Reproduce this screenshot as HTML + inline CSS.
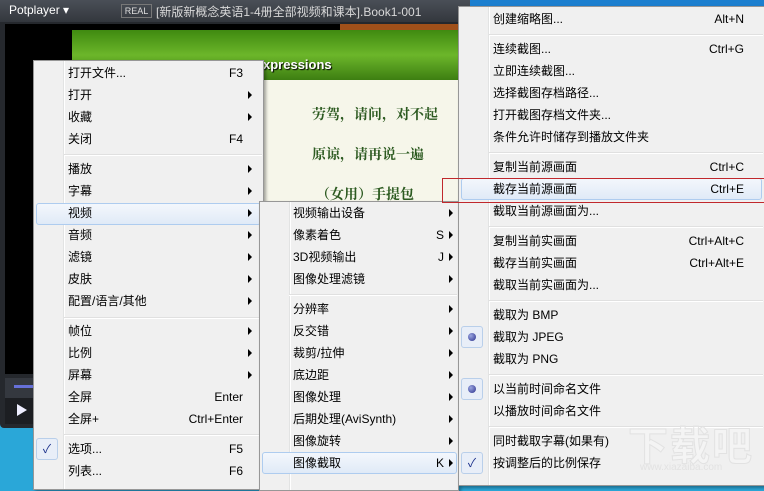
<!DOCTYPE html>
<html><head><meta charset="utf-8"><style>
*{margin:0;padding:0;box-sizing:border-box}
body{width:764px;height:478px;overflow:hidden;position:relative;background:#2aa7d8;font-family:"Liberation Sans","Noto Sans CJK SC",sans-serif;font-size:12px;color:#000}
.abs{position:absolute}
.menu{position:absolute;background:#f0f0f0;border:1px solid #979797;box-shadow:2px 2px 3px rgba(0,0,0,.35)}
.gut{position:absolute;top:0;bottom:0;border-left:1px solid #e2e3e3;border-right:1px solid #fff}
.it{position:absolute;height:22px;line-height:22px;white-space:nowrap}
.sc{position:absolute;height:22px;line-height:22px;text-align:right}
.ar{position:absolute;width:0;height:0;border-top:4px solid transparent;border-bottom:4px solid transparent;border-left:4px solid #000}
.sep{position:absolute;height:2px;border-top:1px solid #e0e0e0;border-bottom:1px solid #fff}
.hl{position:absolute;height:22px;border:1px solid #aeccef;border-radius:3px;background:linear-gradient(#f3f7fc,#e0eaf7)}
.chk{position:absolute;width:22px;height:22px;border:1px solid #b9cfea;border-radius:3px;background:#e8eef8;text-align:center;line-height:20px;color:#1a2f8a}
.dot{display:inline-block;width:8px;height:8px;border-radius:50%;background:radial-gradient(circle at 35% 35%,#9aa6e0,#2a2f8c);margin-top:6px}
</style></head><body>
<div class="abs" style="left:0;top:0;width:470px;height:428px;background:#25282d;border-radius:0 0 4px 4px"></div>
<div class="abs" style="left:0;top:0;width:470px;height:22px;background:linear-gradient(#4a4f57,#33373d)"></div>
<div class="abs" style="left:9px;top:3px;color:#fff;font-size:12px">Potplayer ▾</div>
<div class="abs" style="left:121px;top:4px;width:31px;height:14px;border:1px solid #777;color:#ddd;font-size:9px;line-height:12px;text-align:center">REAL</div>
<div class="abs" style="left:156px;top:3px;color:#d8d8d8;font-size:12px">[新版新概念英语1-4册全部视频和课本].Book1-001</div>
<div class="abs" style="left:5px;top:24px;width:460px;height:350px;background:#000"></div>
<div class="abs" style="left:72px;top:30px;width:392px;height:50px;background:linear-gradient(#3f8a10,#6cb62a 50%,#3d7e12)"></div>
<div class="abs" style="left:340px;top:24px;width:125px;height:6px;background:#a0501a"></div>
<div class="abs" style="left:263px;top:57px;color:#fff;font-weight:bold;font-size:13px;text-shadow:1px 1px 1px #000">xpressions</div>
<div class="abs" style="left:72px;top:80px;width:392px;height:294px;background:#f6f6ea"></div>
<div class="abs" style="left:312px;top:104px;color:#2c5a20;font-size:14px;font-family:'Noto Serif CJK SC',serif;font-weight:bold">劳驾，请问，对不起</div>
<div class="abs" style="left:312px;top:144px;color:#2c5a20;font-size:14px;font-family:'Noto Serif CJK SC',serif;font-weight:bold">原谅，请再说一遍</div>
<div class="abs" style="left:316px;top:184px;color:#2c5a20;font-size:14px;font-family:'Noto Serif CJK SC',serif;font-weight:bold">（女用）手提包</div>
<div class="abs" style="left:5px;top:378px;width:30px;height:20px;background:#34383f"></div>
<div class="abs" style="left:14px;top:385px;width:20px;height:3px;background:#6670d8"></div>
<div class="abs" style="left:5px;top:398px;width:30px;height:26px;background:#1c1e22"></div>
<div class="abs" style="left:17px;top:404px;width:0;height:0;border-top:6px solid transparent;border-bottom:6px solid transparent;border-left:10px solid #eef"></div>
<div class="abs" style="left:470px;top:0;width:294px;height:6px;background:#1c7fcf"></div>

<div class="menu" style="left:33px;top:60px;width:231px;height:430px"><div class="gut" style="left:29px"></div></div>
<div class="hl" style="left:36px;top:203px;width:225px"></div>
<div class="chk" style="left:36px;top:438px">✓</div>
<div class="sep" style="left:64px;top:154px;width:198px"></div>
<div class="sep" style="left:64px;top:317px;width:198px"></div>
<div class="sep" style="left:64px;top:434px;width:198px"></div>

<div class="menu" style="left:259px;top:201px;width:200px;height:290px"><div class="gut" style="left:29px"></div></div>
<div class="sep" style="left:289px;top:294px;width:168px"></div>
<div class="hl" style="left:262px;top:452px;width:195px"></div>

<div class="menu" style="left:458px;top:6px;width:308px;height:480px"><div class="gut" style="left:29px"></div></div>
<div class="sep" style="left:489px;top:34px;width:274px"></div>
<div class="sep" style="left:489px;top:152px;width:274px"></div>
<div class="sep" style="left:489px;top:226px;width:274px"></div>
<div class="sep" style="left:489px;top:300px;width:274px"></div>
<div class="sep" style="left:489px;top:374px;width:274px"></div>
<div class="sep" style="left:489px;top:426px;width:274px"></div>
<div class="hl" style="left:461px;top:178px;width:301px"></div>
<div class="chk" style="left:461px;top:326px"><span class="dot"></span></div>
<div class="chk" style="left:461px;top:378px"><span class="dot"></span></div>
<div class="chk" style="left:461px;top:452px">✓</div>
<div class="abs" style="left:442px;top:178px;width:324px;height:25px;border:1px solid #c0282c"></div>
<div class="abs" style="left:628px;top:414px;font-size:40px;color:rgba(255,255,255,.25);font-weight:bold;letter-spacing:2px;-webkit-text-stroke:1px #e2e2e2">下载吧</div>
<div class="abs" style="left:640px;top:462px;font-size:10px;color:#e2e2e2">www.xiazaiba.com</div>

<div id="items"></div>
<script>
var h='';
function add(x,sx,ax,rows){rows.forEach(function(r){var t=r[0]-11;
h+='<div class="it" style="left:'+x+'px;top:'+t+'px">'+r[1]+'</div>';
if(r[2])h+='<div class="sc" style="right:'+(764-sx)+'px;top:'+t+'px">'+r[2]+'</div>';
if(r[3])h+='<div class="ar" style="left:'+ax+'px;top:'+(r[0]-4)+'px"></div>';});}
add(68,243,248,[[73,'打开文件...','F3'],[95,'打开','',1],[117,'收藏','',1],[139,'关闭','F4'],[169,'播放','',1],[191,'字幕','',1],[213,'视频','',1],[235,'音频','',1],[257,'滤镜','',1],[279,'皮肤','',1],[301,'配置/语言/其他','',1],[331,'帧位','',1],[353,'比例','',1],[375,'屏幕','',1],[397,'全屏','Enter'],[419,'全屏+','Ctrl+Enter'],[449,'选项...','F5'],[471,'列表...','F6']]);
add(293,444,449,[[213,'视频输出设备','',1],[235,'像素着色','S',1],[257,'3D视频输出','J',1],[279,'图像处理滤镜','',1],[309,'分辨率','',1],[331,'反交错','',1],[353,'裁剪/拉伸','',1],[375,'底边距','',1],[397,'图像处理','',1],[419,'后期处理(AviSynth)','',1],[441,'图像旋转','',1],[463,'图像截取','K',1]]);
add(493,744,0,[[19,'创建缩略图...','Alt+N'],[49,'连续截图...','Ctrl+G'],[71,'立即连续截图...'],[93,'选择截图存档路径...'],[115,'打开截图存档文件夹...'],[137,'条件允许时储存到播放文件夹'],[167,'复制当前源画面','Ctrl+C'],[189,'截存当前源画面','Ctrl+E'],[211,'截取当前源画面为...'],[241,'复制当前实画面','Ctrl+Alt+C'],[263,'截存当前实画面','Ctrl+Alt+E'],[285,'截取当前实画面为...'],[315,'截取为 BMP'],[337,'截取为 JPEG'],[359,'截取为 PNG'],[389,'以当前时间命名文件'],[411,'以播放时间命名文件'],[441,'同时截取字幕(如果有)'],[463,'按调整后的比例保存']]);
document.getElementById('items').innerHTML=h;
</script>
</body></html>
